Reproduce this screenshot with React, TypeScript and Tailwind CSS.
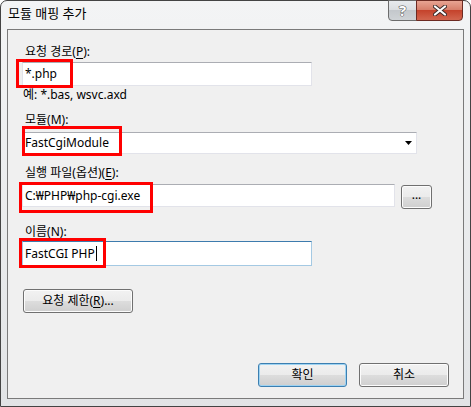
import type { ReactNode } from "react";

const font = "font-['Noto_Sans','Noto_Sans_CJK_KR',sans-serif]";

function Key({ children }: { children: ReactNode }) {
  return <span className="underline underline-offset-2">{children}</span>;
}

function Label({ children, className = "" }: { children: ReactNode; className?: string }) {
  return <div className={`h-[14px] pl-[17px] text-[12px] leading-[14px] text-black ${className}`}>{children}</div>;
}

function RedBox({ className }: { className: string }) {
  return <div className={`pointer-events-none absolute border-[3px] border-[#ff0000] ${className}`} />;
}

function WinButton({ children, focused = false, className = "" }: { children: ReactNode; focused?: boolean; className?: string }) {
  return (
    <button
      type="button"
      className={`flex items-center justify-center rounded-[3px] border bg-[linear-gradient(#f2f2f2_0%,#ebebeb_50%,#dddddd_50%,#cfcfcf_100%)] text-[12px] text-black ${
        focused ? "border-[#3c7fb1] shadow-[inset_0_0_0_1px_#9ed3f2]" : "border-[#707070] shadow-[inset_0_0_0_1px_#fcfcfc]"
      } ${className}`}
    >
      {children}
    </button>
  );
}

export default function App() {
  return (
    <div className={`h-[407px] w-[471px] bg-white ${font}`}>
      <div className="flex h-[407px] w-[471px] flex-col rounded-t-[7px] border border-[#444] bg-[linear-gradient(#f3f4f5,#e2e4e6)]">
        {/* title bar */}
        <div className="flex h-[28px] items-start">
          <div className="mt-[5px] pl-[7px] text-[13px] leading-[15px] text-black">모듈 매핑 추가</div>
          <div className="ml-auto mr-[7px] flex -mt-px">
            <div className="flex h-[21px] w-[29px] items-center justify-center rounded-bl-[4px] border border-[#6c6c6c] bg-[linear-gradient(#e8ebee_0%,#dadde0_50%,#c4c8cc_50%,#cfd3d6_100%)]">
              <span className="text-[15px] font-bold leading-none text-white [-webkit-text-stroke:1px_#4a4a4a] [paint-order:stroke_fill]">?</span>
            </div>
            <div className="-ml-px flex h-[21px] w-[47px] items-center justify-center rounded-br-[4px] border border-[#6c2a22] bg-[linear-gradient(#e8a493_0%,#d77f6b_45%,#c5432c_50%,#d2664f_100%)]">
              <svg width="14" height="11" viewBox="0 0 14 11">
                <path d="M2 1.5 L12 9.5 M12 1.5 L2 9.5" stroke="#3b2a28" strokeWidth="4" strokeLinecap="round" />
                <path d="M2 1.5 L12 9.5 M12 1.5 L2 9.5" stroke="#ffffff" strokeWidth="2.2" strokeLinecap="round" />
              </svg>
            </div>
          </div>
        </div>

        {/* client area */}
        <div className="ml-[6px] flex h-[370px] w-[457px] flex-col border border-[#7a7a7a] bg-[#f0f0f0] pl-[14px] pr-[14px]">
          <Label className="mt-[15px] -ml-[14px]">
            요청 경로(<Key>P</Key>):
          </Label>
          <div className="relative mt-[3px] flex h-[24px] w-[290px] items-center border border-[#e2e3ea] border-t-[#abadb3] bg-white pl-[2px] text-[12px]">
            *.php
            <RedBox className="-left-[7px] -top-[4px] h-[29px] w-[57px]" />
          </div>
          <div className="mt-[2px] h-[14px] pl-px text-[12px] leading-[14px] text-black">예: *.bas, wsvc.axd</div>

          <Label className="mt-[11px] -ml-[14px]">
            모듈(<Key>M</Key>):
          </Label>
          <div className="relative mt-[5px] flex h-[22px] w-[395px] items-center border border-[#e2e3ea] border-t-[#abadb3] bg-white pl-[2px] text-[12px]">
            FastCgiModule
            <svg className="ml-auto mr-[4px]" width="7" height="4" viewBox="0 0 7 4">
              <path d="M0 0 H7 L3.5 4 Z" fill="#000" />
            </svg>
            <RedBox className="-left-[1px] -top-[7px] h-[30px] w-[100px]" />
          </div>

          <Label className="mt-[12px] -ml-[14px]">
            실행 파일(옵션)(<Key>E</Key>):
          </Label>
          <div className="mt-[4px] flex items-start gap-[6px]">
            <div className="relative flex h-[23px] w-[373px] items-center border border-[#e2e3ea] border-t-[#abadb3] bg-white pl-[2px] text-[12px]">
              C:₩PHP₩php-cgi.exe
              <RedBox className="-left-[4px] -top-[3px] h-[31px] w-[134px]" />
            </div>
            <WinButton className="mt-px h-[24px] w-[31px] pb-[4px]">...</WinButton>
          </div>

          <Label className="mt-[16px] -ml-[14px]">
            이름(<Key>N</Key>):
          </Label>
          <div className="relative mt-[2px] flex h-[25px] w-[290px] items-center border border-[#a4c9e3] border-t-[#3d7bad] bg-white pl-[2px] text-[12px]">
            FastCGI PHP
            <span className="ml-px h-[15px] border-l border-black" />
            <RedBox className="-left-[4px] -top-[4px] h-[30px] w-[87px]" />
          </div>

          <WinButton className="mt-[23px] ml-px h-[24px] w-[110px]">
            요청 제한(<Key>R</Key>)...
          </WinButton>

          <div className="mt-[50px] flex justify-end gap-[12px]">
            <WinButton focused className="h-[24px] w-[89px]">
              확인
            </WinButton>
            <WinButton className="h-[24px] w-[90px]">취소</WinButton>
          </div>
        </div>
      </div>
    </div>
  );
}
